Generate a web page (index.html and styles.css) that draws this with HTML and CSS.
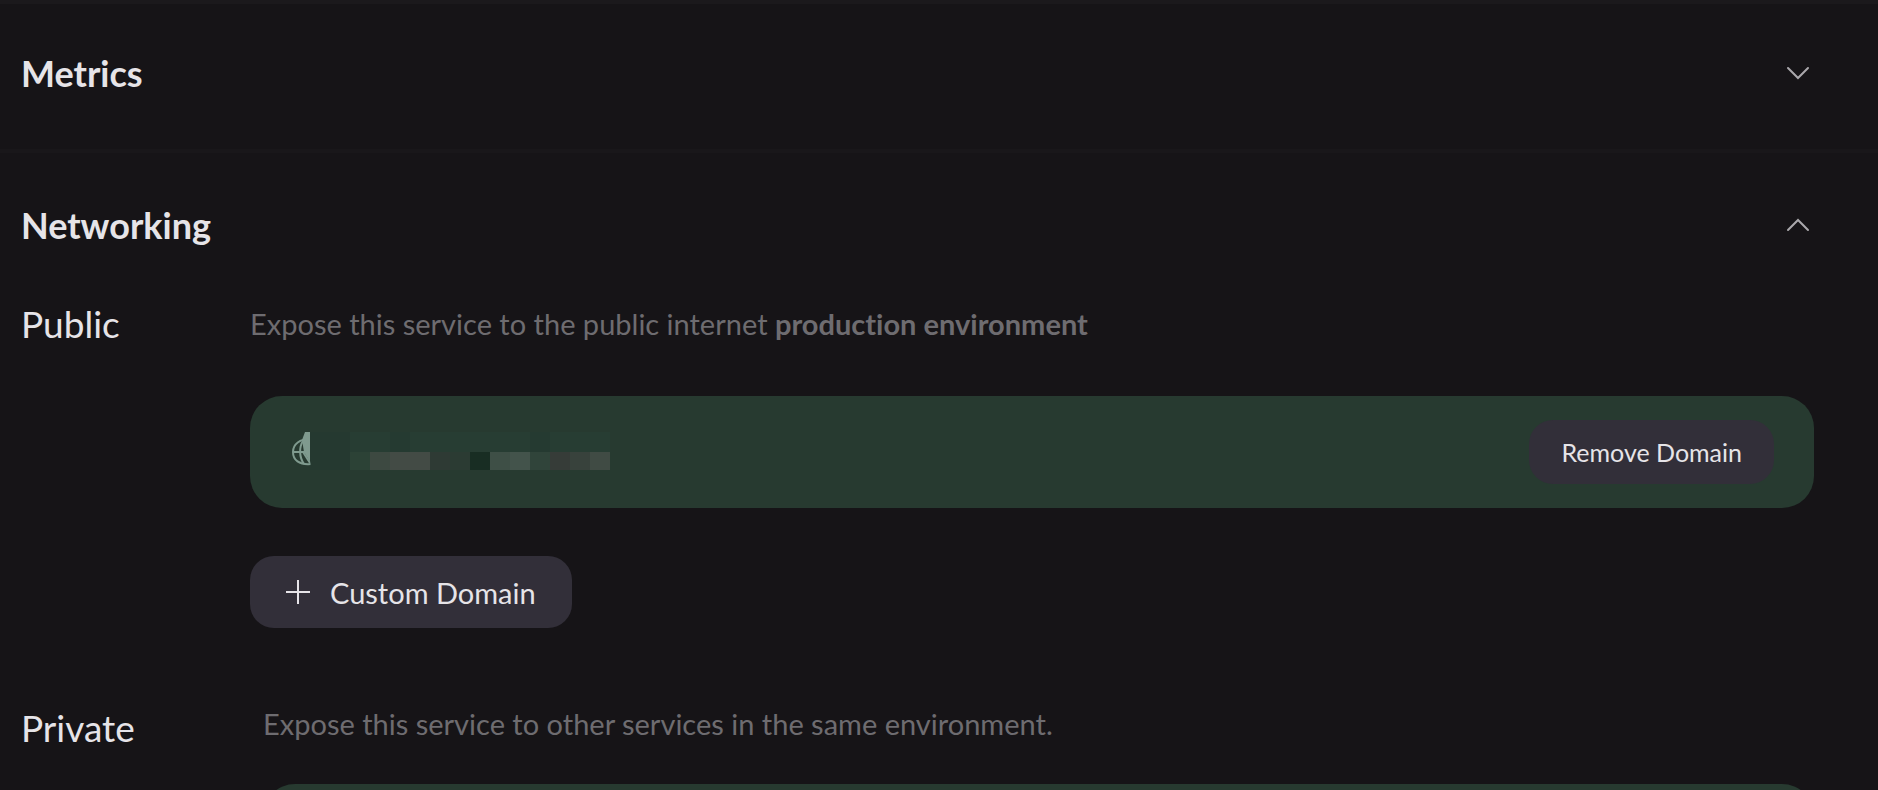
FILE: index.html
```
<!DOCTYPE html>
<html lang="en">
<head>
    <meta charset="utf-8">
    <title>Service Settings</title>
    <link rel="stylesheet" href="styles.css">
</head>
<body>
    <section class="panel metrics">
        <h2>
            <button type="button" class="panel-toggle" aria-expanded="false">
                Metrics
                <svg class="chevron" viewBox="0 0 24 14" aria-hidden="true"><path d="M2 2l10 10L22 2"/></svg>
            </button>
        </h2>
    </section>

    <section class="panel networking">
        <h2>
            <button type="button" class="panel-toggle" aria-expanded="true">
                Networking
                <svg class="chevron" viewBox="0 0 24 14" aria-hidden="true"><path d="M2 12L12 2l10 10"/></svg>
            </button>
        </h2>

        <div class="setting public">
            <h3>Public</h3>
            <div class="setting-body">
                <p>Expose this service to the public internet <strong>production environment</strong></p>
                <div class="domain">
                    <!-- globe and masked domain name -->
                    <svg class="domain-name" viewBox="0 0 320 40" role="img" aria-label="Hidden domain">
                        <g fill="none" stroke="#7f9a8e" stroke-width="2">
                            <path d="M18 7C8 7 1 12 1 20s6 13 18 12"/>
                            <path d="M2 20h16M11 9c-4 6-4 16 1 23M11 20l7 11"/>
                        </g>
                        <path fill="#7f9a8e" d="M13 0h5v30l-6-10-2-12z"/>
                        <path fill="#23382f" d="M18 0h40v38H18z" opacity=".5"/>
                        <path fill="#283f35" d="M58 0h260v20H58z" opacity=".7"/>
                        <path fill="#253a31" d="M98 0h20v20H98zM238 0h20v20h-20z"/>
                        <path fill="#2c4236" d="M58 20h20v18H58z"/>
                        <path fill="#3d4941" d="M78 20h20v18H78z"/>
                        <path fill="#434b45" d="M98 20h40v18H98z"/>
                        <path fill="#2e3a34" d="M138 20h20v18h-20z"/>
                        <path fill="#2b3b33" d="M158 20h20v18h-20z"/>
                        <path fill="#182d23" d="M178 20h20v18h-20z"/>
                        <path fill="#3e4f46" d="M198 20h20v18h-20z"/>
                        <path fill="#43534b" d="M218 20h20v18h-20z"/>
                        <path fill="#30443a" d="M238 20h20v18h-20z"/>
                        <path fill="#363c38" d="M258 20h20v18h-20z"/>
                        <path fill="#38423c" d="M278 20h20v18h-20z"/>
                        <path fill="#404b44" d="M298 20h20v18h-20z"/>
                    </svg>
                    <button type="button" class="btn btn-small">Remove Domain</button>
                </div>
                <button type="button" class="btn">
                    <svg class="plus" viewBox="0 0 24 24" aria-hidden="true"><path d="M12 0v24M0 12h24"/></svg>
                    Custom Domain
                </button>
            </div>
        </div>

        <div class="setting private">
            <h3>Private</h3>
            <div class="setting-body">
                <p>Expose this service to other services in the same environment.</p>
                <div class="domain"></div>
            </div>
        </div>
    </section>
</body>
</html>
```
FILE: styles.css
```
* {
    box-sizing: border-box;
}

body {
    margin: 0;
    height: 100vh;
    overflow: hidden;
    background-color: #161417;
    color: #e6e4e8;
    font-family: Lato, sans-serif;
    font-variant-ligatures: none;
}

h2,
h3,
p {
    margin: 0;
}

.panel {
    border-top: 4px solid #19171a;
    padding: 0 64px 0 21px;
}

.metrics {
    border-top-color: #1b191c;
    padding-top: 45px;
    padding-bottom: 52px;
}

.networking {
    padding-top: 48px;
}

.panel-toggle {
    display: flex;
    align-items: center;
    justify-content: space-between;
    width: 100%;
    padding: 0 4px 0 0;
    border: none;
    background: none;
    color: inherit;
    font: bold 36px/48px Lato, sans-serif;
    cursor: pointer;
}

.chevron {
    width: 24px;
    height: 14px;
    fill: none;
    stroke: #aaa8ac;
    stroke-width: 2;
    stroke-linecap: round;
}

.setting {
    display: flex;
}

.setting h3 {
    flex: none;
    width: 229px;
    font-size: 37px;
    font-weight: normal;
    line-height: 48px;
}

.setting-body {
    flex: 1;
}

.setting p {
    color: #6e6c70;
    font-size: 29px;
    line-height: 48px;
}

.public {
    margin-top: 51px;
}

.private {
    margin-top: 72px;
}

.private h3 {
    width: 242px;
    padding-top: 4px;
}

.domain {
    display: flex;
    align-items: center;
    justify-content: space-between;
    height: 112px;
    padding: 0 40px 0 42px;
    border-radius: 32px;
    background-color: #273a30;
}

.public .domain {
    margin: 48px 0;
}

.private .domain {
    margin-top: 36px;
}

.domain-name {
    width: 320px;
    height: 40px;
}

.btn {
    display: flex;
    align-items: center;
    gap: 20px;
    height: 72px;
    padding: 0 36px;
    border: none;
    border-radius: 24px;
    background-color: #322f39;
    color: #e6e4e8;
    font: 29px Lato, sans-serif;
    cursor: pointer;
}

.btn-small {
    height: 64px;
    padding: 0 32px;
    font-size: 25px;
}

.plus {
    width: 24px;
    height: 24px;
    stroke: #e6e4e8;
    stroke-width: 2;
}
```
